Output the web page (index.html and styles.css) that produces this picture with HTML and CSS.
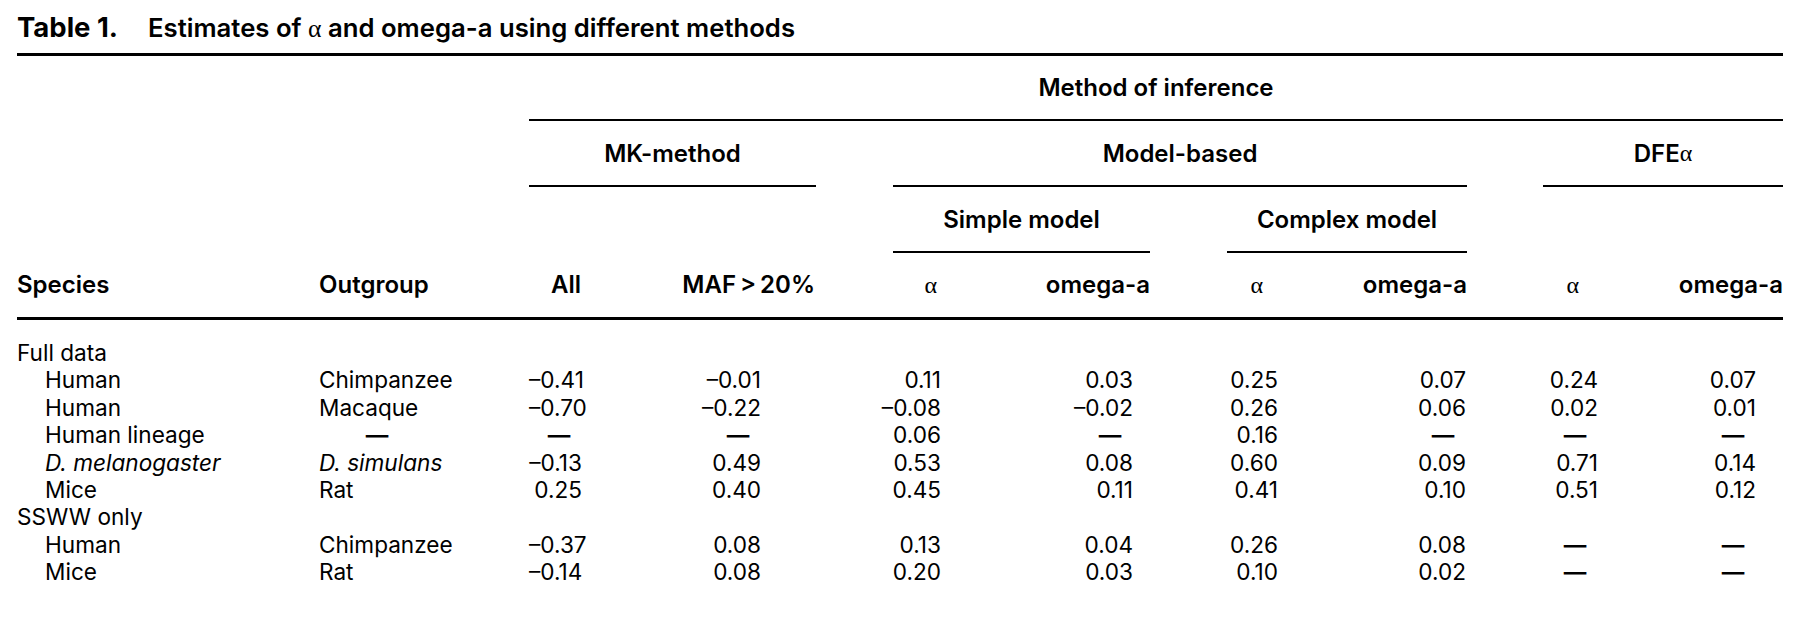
FILE: index.html
```html
<!DOCTYPE html>
<html lang="en">
<head>
<meta charset="utf-8">
<title>Table 1</title>
<link rel="stylesheet" href="styles.css">
</head>
<body>
<div class="page">
  <div class="caption"><span class="label">Table 1.</span><span class="ctitle">Estimates of <span class="greek">α</span> and omega-a using different methods</span></div>
  <table class="est">
    <colgroup>
      <col class="c-species"><col class="c-out"><col class="c-all"><col class="c-maf"><col class="c-sa"><col class="c-so"><col class="c-ca"><col class="c-co"><col class="c-da"><col class="c-do">
    </colgroup>
    <thead>
      <tr class="h1">
        <th colspan="2" rowspan="3" class="blank"></th>
        <th colspan="8" class="grp g-method"><div class="rule r1">Method of inference</div></th>
      </tr>
      <tr class="h2">
        <th colspan="2" class="grp g-mk"><div class="rule">MK-method</div></th>
        <th colspan="4" class="grp g-model"><div class="rule">Model-based</div></th>
        <th colspan="2" class="grp g-dfe"><div class="rule">DFE<span class="greek">α</span></div></th>
      </tr>
      <tr class="h3">
        <th colspan="2" class="blank"></th>
        <th colspan="2" class="grp g-simple"><div class="rule">Simple model</div></th>
        <th colspan="2" class="grp g-complex"><div class="rule">Complex model</div></th>
        <th colspan="2" class="blank"></th>
      </tr>
      <tr class="h4">
        <th class="left">Species</th>
        <th class="left">Outgroup</th>
        <th>All</th>
        <th>MAF&#8201;&gt;&#8201;20%</th>
        <th><span class="greek">α</span></th>
        <th>omega-a</th>
        <th><span class="greek">α</span></th>
        <th>omega-a</th>
        <th><span class="greek">α</span></th>
        <th>omega-a</th>
      </tr>
    </thead>
    <tbody>
      <tr class="first">
        <td class="grouplabel">Full data</td><td></td><td></td><td></td><td></td><td></td><td></td><td></td><td></td><td></td>
      </tr>
      <tr>
        <td class="sp">Human</td><td class="og">Chimpanzee</td>
        <td>–0.41</td><td>–0.01</td><td>0.11</td><td>0.03</td><td>0.25</td><td>0.07</td><td>0.24</td><td>0.07</td>
      </tr>
      <tr>
        <td class="sp">Human</td><td class="og">Macaque</td>
        <td>–0.70</td><td>–0.22</td><td>–0.08</td><td>–0.02</td><td>0.26</td><td>0.06</td><td>0.02</td><td>0.01</td>
      </tr>
      <tr>
        <td class="sp">Human lineage</td><td class="og og-dash"><span class="dash">—</span></td>
        <td><span class="dash">—</span></td><td><span class="dash">—</span></td><td>0.06</td><td><span class="dash">—</span></td><td>0.16</td><td><span class="dash">—</span></td><td><span class="dash">—</span></td><td><span class="dash">—</span></td>
      </tr>
      <tr>
        <td class="sp"><i>D. melanogaster</i></td><td class="og"><i>D. simulans</i></td>
        <td>–0.13</td><td>0.49</td><td>0.53</td><td>0.08</td><td>0.60</td><td>0.09</td><td>0.71</td><td>0.14</td>
      </tr>
      <tr>
        <td class="sp">Mice</td><td class="og">Rat</td>
        <td>0.25</td><td>0.40</td><td>0.45</td><td>0.11</td><td>0.41</td><td>0.10</td><td>0.51</td><td>0.12</td>
      </tr>
      <tr>
        <td class="grouplabel">SSWW only</td><td></td><td></td><td></td><td></td><td></td><td></td><td></td><td></td><td></td>
      </tr>
      <tr>
        <td class="sp">Human</td><td class="og">Chimpanzee</td>
        <td>–0.37</td><td>0.08</td><td>0.13</td><td>0.04</td><td>0.26</td><td>0.08</td><td><span class="dash">—</span></td><td><span class="dash">—</span></td>
      </tr>
      <tr>
        <td class="sp">Mice</td><td class="og">Rat</td>
        <td>–0.14</td><td>0.08</td><td>0.20</td><td>0.03</td><td>0.10</td><td>0.02</td><td><span class="dash">—</span></td><td><span class="dash">—</span></td>
      </tr>
    </tbody>
  </table>
</div>
</body>
</html>
```

FILE: styles.css
```css
html, body {
  margin: 0;
  padding: 0;
  background: #fff;
}

body {
  font-family: Inter, "Open Sans", sans-serif;
  color: #000;
}

.page {
  padding: 0 17px;
  width: 1766px;
}

.caption {
  padding: 12px 0 9px;
  font-size: 25.7px;
  line-height: 30px;
  font-weight: 600;
  white-space: nowrap;
}

.caption .label {
  font-size: 27.5px;
  font-weight: 700;
  margin-right: 30px;
}

.greek {
  font-family: "Liberation Serif", "DejaVu Serif", serif;
  font-weight: 400;
}

.est {
  width: 1766px;
  table-layout: fixed;
  border-collapse: separate;
  border-spacing: 0;
  border-top: 3px solid #000;
  font-size: 22.6px;
}

.c-species { width: 302px; }
.c-out { width: 210px; }
.c-all { width: 131px; }
.c-maf { width: 195px; }
.c-sa { width: 155px; }
.c-so { width: 178px; }
.c-ca { width: 142px; }
.c-co { width: 175px; }
.c-da { width: 135px; }
.c-do { width: 143px; }

.est th {
  padding: 0;
  font-size: 24px;
  font-weight: 600;
  white-space: nowrap;
}

.est .rule {
  height: 64px;
  display: flex;
  align-items: center;
  justify-content: center;
  border-bottom: 2px solid #000;
}

.est .rule.r1 {
  height: 63px;
}

.est th.g-mk { padding-right: 39px; }
.est th.g-model { padding: 0 38px; }
.est th.g-dfe { padding-left: 38px; }
.est th.g-simple { padding: 0 38px; }
.est th.g-complex { padding: 0 38px 0 39px; }

.h4 th {
  line-height: 64px;
  border-bottom: 3px solid #000;
  text-align: right;
  vertical-align: middle;
}

.h4 th.left { text-align: left; }
.h4 th:nth-child(3) { padding-right: 79px; }
.h4 th:nth-child(4) { padding-right: 40px; }
.h4 th:nth-child(5) { padding-right: 73px; }
.h4 th:nth-child(6) { padding-right: 38px; }
.h4 th:nth-child(7) { padding-right: 67px; }
.h4 th:nth-child(8) { padding-right: 38px; }
.h4 th:nth-child(9) { padding-right: 61px; }
.h4 th:nth-child(10) { padding-right: 0; }

.est td {
  padding: 0;
  line-height: 27.4px;
  text-align: right;
  white-space: nowrap;
}

.est tbody tr.first td {
  padding-top: 19px;
}

.est td.grouplabel { text-align: left; }
.est td.sp { text-align: left; padding-left: 28px; }
.est td.og { text-align: left; }
.est td.og-dash { padding-left: 35px; }

.est td:nth-child(3) { padding-right: 78px; }
.est td:nth-child(4) { padding-right: 94px; }
.est td:nth-child(5) { padding-right: 69px; }
.est td:nth-child(6) { padding-right: 55px; }
.est td:nth-child(7) { padding-right: 52px; }
.est td:nth-child(8) { padding-right: 39px; }
.est td:nth-child(9) { padding-right: 42px; }
.est td:nth-child(10) { padding-right: 27px; }

.dash {
  display: inline-block;
  width: 46px;
  text-align: center;
  font-weight: 600;
}
```
